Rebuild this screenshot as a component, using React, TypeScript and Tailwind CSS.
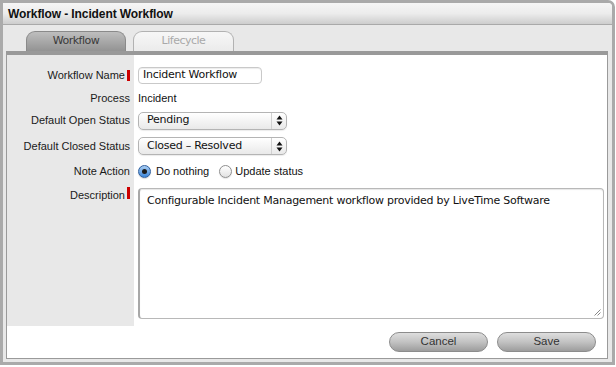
import React from "react";

const lucida = { fontFamily: '"DejaVu Sans", Verdana, sans-serif' };
const helv = { fontFamily: '"Liberation Sans", Arial, sans-serif' };

function Label({ text, required }: { text: string; required?: boolean }) {
  return (
    <div
      className="w-[127px] shrink-0 bg-[#e8e8e8] flex justify-end items-center pr-[4px] text-[11px] text-[#1a1a1a]"
      style={helv}
    >
      <span>{text}</span>
      {required && <span className="ml-[2px] w-[3px] h-[11px] bg-[#cc0000]" />}
    </div>
  );
}

function Select({ value }: { value: string }) {
  return (
    <div className="w-[149px] h-[18px] rounded-[5px] border border-[#b4b4b4] bg-gradient-to-b from-[#ffffff] to-[#e9e9e9] flex items-center shadow-[0_1px_1px_rgba(0,0,0,0.08)]">
      <span className="flex-1 pl-[8px] text-[11px] tracking-[-0.25px] text-[#111]" style={lucida}>
        {value}
      </span>
      <div className="w-[15px] h-full border-l border-[#d0d0d0] flex items-center justify-center">
        <svg width="7" height="11" viewBox="0 0 7 11">
          <path d="M3.5 0.5 L6.5 4.5 L0.5 4.5 Z" fill="#111" />
          <path d="M3.5 10.5 L6.5 6.5 L0.5 6.5 Z" fill="#111" />
        </svg>
      </div>
    </div>
  );
}

function Radio({ checked }: { checked?: boolean }) {
  if (checked) {
    return (
      <span className="shrink-0 w-[13px] h-[13px] rounded-full border border-[#2f5f9e] bg-gradient-to-b from-[#a8cdf2] to-[#3b86d9] flex items-center justify-center shadow-[0_1px_1px_rgba(0,0,0,0.15)]">
        <span className="w-[5px] h-[5px] rounded-full bg-[#1b1b1b]" />
      </span>
    );
  }
  return (
    <span className="shrink-0 block w-[13px] h-[13px] rounded-full border border-[#8e8e8e] bg-gradient-to-b from-[#ffffff] to-[#e2e2e2] shadow-[0_1px_1px_rgba(0,0,0,0.1)]" />
  );
}

export default function App() {
  return (
    <div className="w-[616px] h-[367px] bg-white">
      <div className="w-[615px] h-[365px] border-[3px] border-[#aaaaaa] rounded-tr-[7px] flex flex-col overflow-hidden">
        {/* Title bar */}
        <div className="h-[22px] shrink-0 bg-gradient-to-b from-[#f6f6f6] via-[#ececec] to-[#cdcdcd] border-b border-[#a9a9a9] flex items-center pl-[5px]">
          <span className="text-[12px] font-bold text-[#111] tracking-[-0.1px]" style={helv}>
            Workflow - Incident Workflow
          </span>
        </div>
        {/* Body */}
        <div className="flex-1 bg-[#e8e8e8] pl-[3px] pr-[4px] pt-[6px] pb-[3px] flex flex-col">
          {/* Tabs */}
          <div className="flex gap-[7px] pl-[20px] h-[20px] items-end">
            <div className="w-[100px] h-[20px] rounded-t-[9px] border border-b-0 border-[#8a8a8a] bg-gradient-to-b from-[#bebebe] to-[#939393] flex items-center justify-center">
              <span className="text-[11px] tracking-[-0.5px] text-[#3a3a3a]" style={lucida}>
                Workflow
              </span>
            </div>
            <div className="w-[101px] h-[20px] rounded-t-[9px] border border-b-0 border-[#b2b2b2] bg-gradient-to-b from-[#f7f7f7] to-[#ebebeb] flex items-center justify-center">
              <span className="text-[11px] tracking-[-0.5px] text-[#a9a9a9]" style={lucida}>
                Lifecycle
              </span>
            </div>
          </div>
          <div className="h-[4px] bg-[#999999]" />
          {/* Content */}
          <div className="flex-1 bg-white border-x border-b border-[#9a9a9a] flex flex-col">
            <div className="flex h-[8px]">
              <div className="w-[127px] bg-[#e8e8e8]" />
            </div>
            <div className="flex h-[25px]">
              <Label text="Workflow Name" required />
              <div className="flex items-center pl-[4px]">
                <div className="w-[124px] h-[17px] rounded-[4px] border border-[#c9c9c9] bg-white flex items-center pl-[4px] shadow-[inset_0_1px_1px_rgba(0,0,0,0.08)]">
                  <span className="text-[11px] tracking-[-0.25px] text-[#111]" style={lucida}>
                    Incident Workflow
                  </span>
                </div>
              </div>
            </div>
            <div className="flex h-[20px]">
              <Label text="Process" />
              <div className="flex items-center pl-[4px] text-[11px] text-[#111]" style={helv}>
                Incident
              </div>
            </div>
            <div className="flex h-[25px]">
              <Label text="Default Open Status" />
              <div className="flex items-center pl-[4px]">
                <Select value="Pending" />
              </div>
            </div>
            <div className="flex h-[26px]">
              <Label text="Default Closed Status" />
              <div className="flex items-center pl-[4px]">
                <Select value="Closed – Resolved" />
              </div>
            </div>
            <div className="flex h-[24px]">
              <Label text="Note Action" />
              <div className="flex items-center pl-[4px] text-[11px] text-[#111]" style={helv}>
                <Radio checked />
                <span className="ml-[5px]">Do nothing</span>
                <span className="ml-[10px] flex items-center">
                  <Radio />
                </span>
                <span className="ml-[3px]">Update status</span>
              </div>
            </div>
            <div className="flex h-[143px]">
              <div
                className="w-[127px] shrink-0 bg-[#e8e8e8] flex justify-end items-start pt-[4px] pr-[4px] text-[11px] text-[#1a1a1a]"
                style={helv}
              >
                <span>Description</span>
                <span className="ml-[2px] mt-[0px] w-[3px] h-[12px] bg-[#cc0000]" />
              </div>
              <div className="flex-1 pl-[4px] pr-[3px] pt-[5px] pb-[7px]">
                <div className="relative h-full rounded-[4px] border border-[#b8b8b8] border-l-[2px] border-l-[#a8a8a8] bg-white pl-[7px] pt-[5px] shadow-[inset_0_1px_1px_rgba(0,0,0,0.1)]">
                  <div className="text-[11px] leading-[14px] tracking-[-0.25px] text-[#111]" style={lucida}>
                    Configurable Incident Management workflow provided by LiveTime Software
                  </div>
                  <svg className="absolute right-[2px] bottom-[2px]" width="7" height="7" viewBox="0 0 7 7">
                    <path d="M6.5 0.5 L0.5 6.5 M6.5 3.5 L3.5 6.5" stroke="#888" strokeWidth="1" />
                  </svg>
                </div>
              </div>
            </div>
            <div className="flex-1 flex justify-end items-start gap-[9px] pt-[6px] pr-[11px]">
              <div className="w-[99px] h-[20px] rounded-full border border-[#8c8c8c] bg-gradient-to-b from-[#dedede] via-[#c2c2c2] to-[#9d9d9d] flex items-center justify-center text-[11.5px] text-[#333]" style={helv}>
                Cancel
              </div>
              <div className="w-[99px] h-[20px] rounded-full border border-[#8c8c8c] bg-gradient-to-b from-[#dedede] via-[#c2c2c2] to-[#9d9d9d] flex items-center justify-center text-[11.5px] text-[#333]" style={helv}>
                Save
              </div>
            </div>
          </div>
        </div>
      </div>
    </div>
  );
}
